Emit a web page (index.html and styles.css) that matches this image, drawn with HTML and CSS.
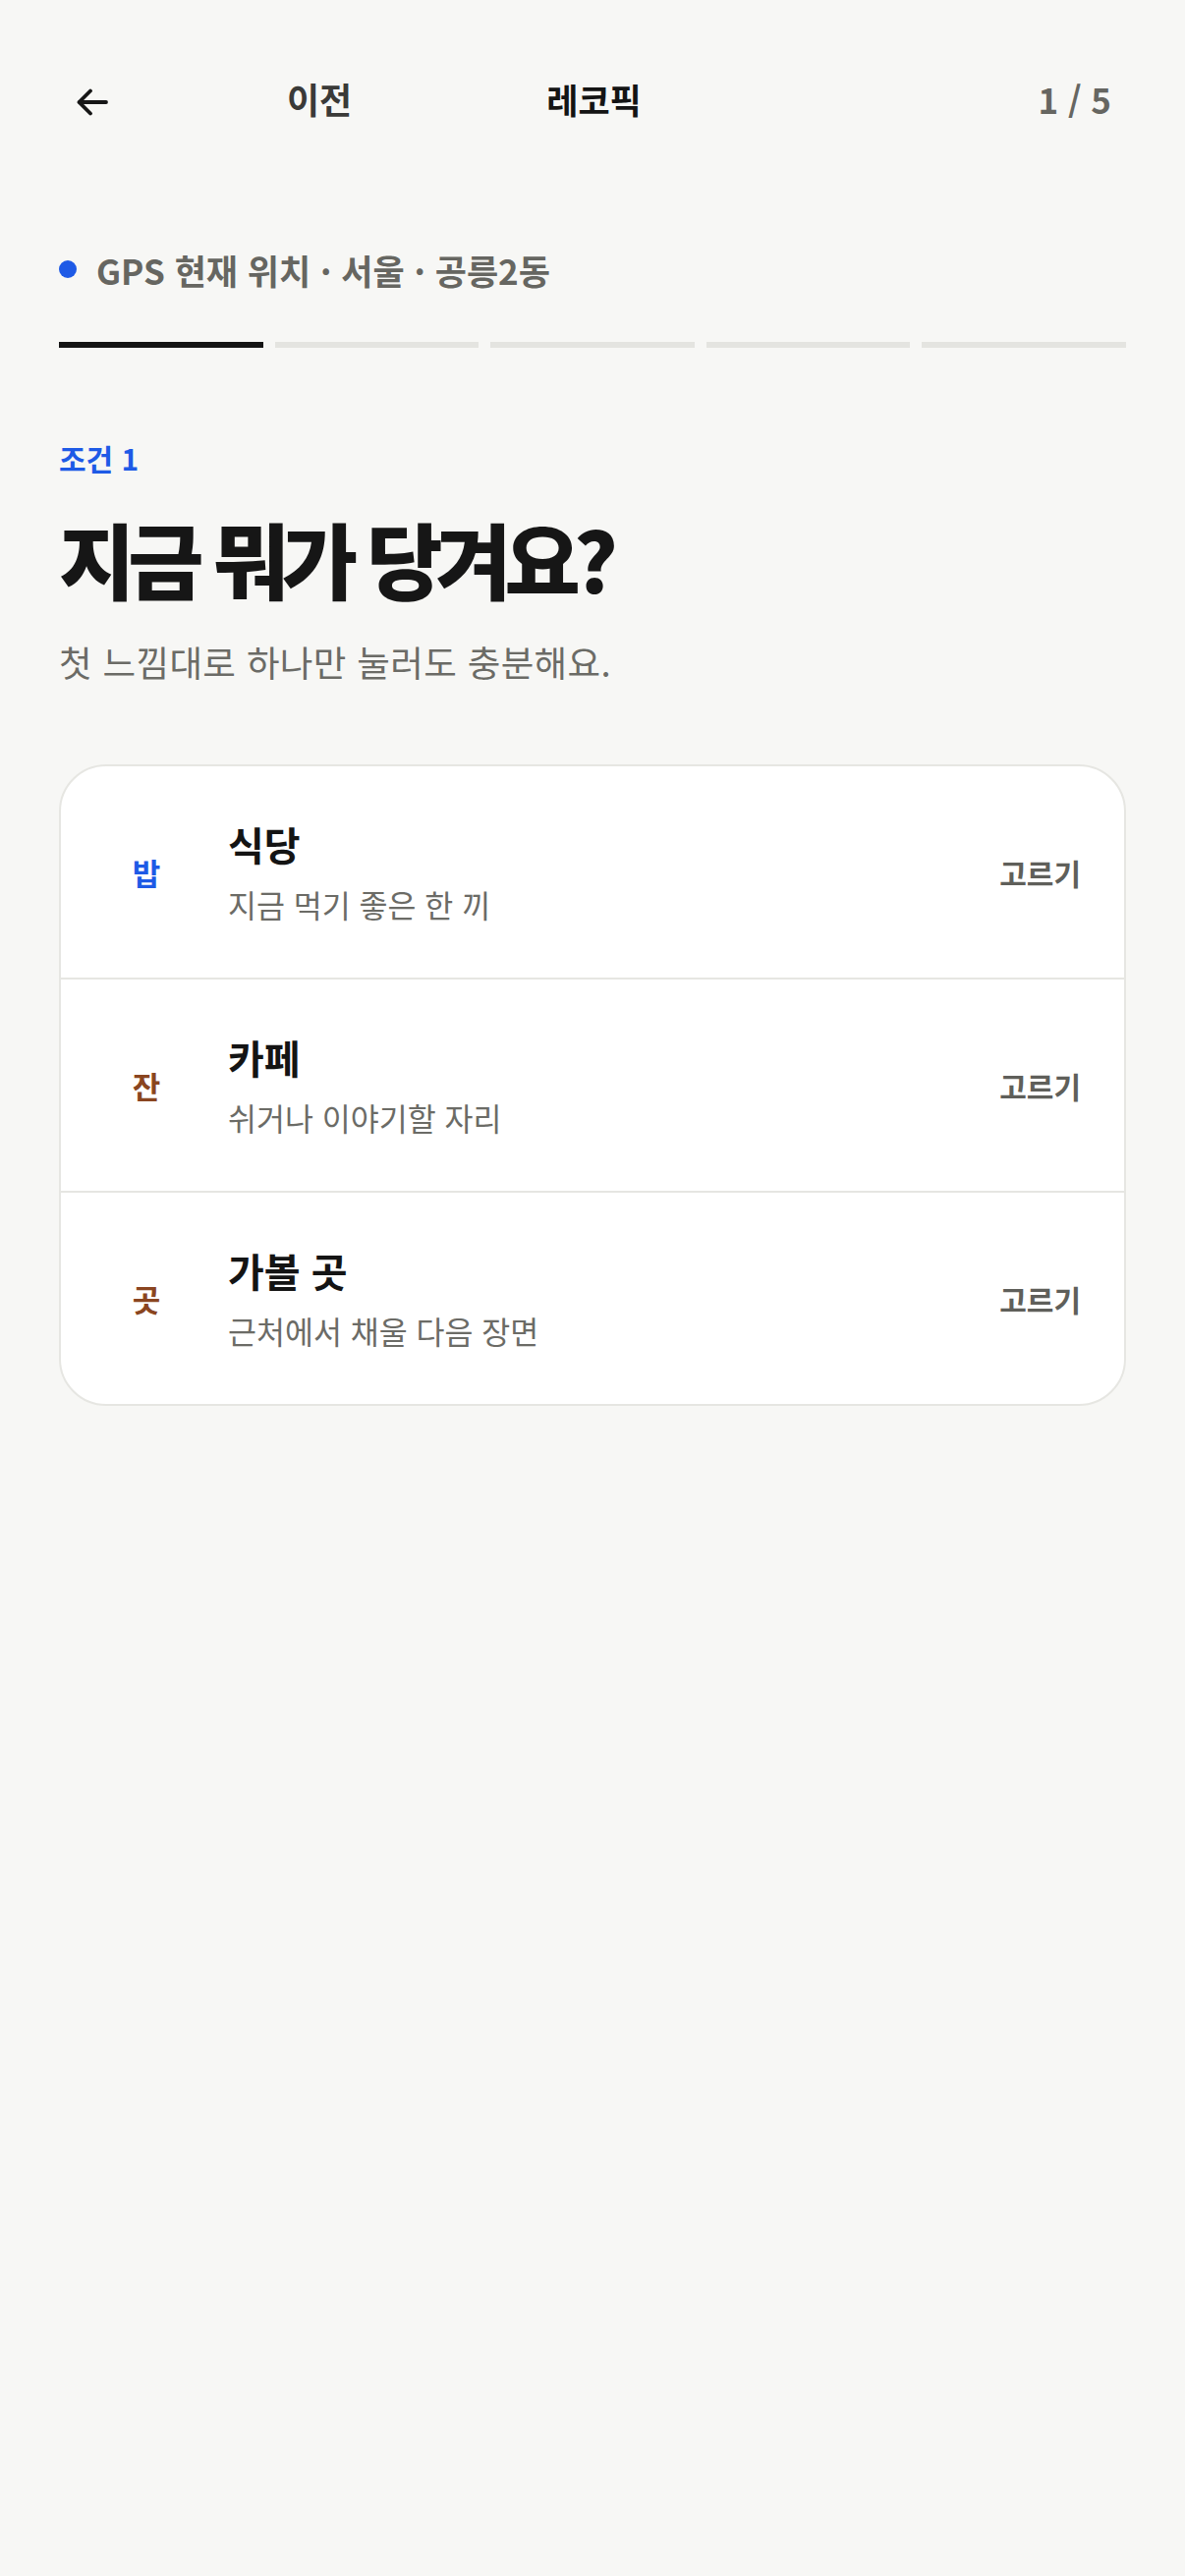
FILE: index.html
```html
<!DOCTYPE html>
<html lang="ko">
<head>
    <meta charset="UTF-8">
    <meta name="viewport" content="width=device-width, initial-scale=1.0">
    <title>레코픽 - 조건 1</title>
    <link rel="stylesheet" href="styles.css">
</head>
<body>
    <header class="topbar">
        <div class="topbar-left">
            <button class="back-btn" aria-label="뒤로">
                <svg width="32" height="28" viewBox="0 0 32 28" fill="none" stroke="#161616" stroke-width="3.8" stroke-linecap="round" stroke-linejoin="round">
                    <path d="M30 14H3"/>
                    <path d="M14 2.5L2.5 14L14 25.5"/>
                </svg>
            </button>
            <span class="prev-label">이전</span>
        </div>
        <div class="brand">레코픽</div>
        <div class="step-count">1 / 5</div>
    </header>

    <main class="page">
        <div class="location">
            <span class="location-dot"></span>
            <span>GPS 현재 위치 · 서울 · 공릉2동</span>
        </div>

        <div class="progress">
            <span class="progress-seg done"></span>
            <span class="progress-seg"></span>
            <span class="progress-seg"></span>
            <span class="progress-seg"></span>
            <span class="progress-seg"></span>
        </div>

        <div class="step-label">조건 1</div>
        <h1 class="question">지금 뭐가 당겨요?</h1>
        <p class="hint">첫 느낌대로 하나만 눌러도 충분해요.</p>

        <div class="choices">
            <div class="choice">
                <span class="choice-icon blue">밥</span>
                <div class="choice-text">
                    <div class="choice-title">식당</div>
                    <div class="choice-desc">지금 먹기 좋은 한 끼</div>
                </div>
                <span class="choice-action">고르기</span>
            </div>
            <div class="choice">
                <span class="choice-icon brown">잔</span>
                <div class="choice-text">
                    <div class="choice-title">카페</div>
                    <div class="choice-desc">쉬거나 이야기할 자리</div>
                </div>
                <span class="choice-action">고르기</span>
            </div>
            <div class="choice">
                <span class="choice-icon brown">곳</span>
                <div class="choice-text">
                    <div class="choice-title">가볼 곳</div>
                    <div class="choice-desc">근처에서 채울 다음 장면</div>
                </div>
                <span class="choice-action">고르기</span>
            </div>
        </div>
    </main>
</body>
</html>
```

FILE: styles.css
```css
body {
    margin: 0;
    min-height: 2622px;
    background-color: #f7f7f5;
    font-family: "Noto Sans CJK KR", "Noto Sans", sans-serif;
    color: #161616;
}
.topbar {
    display: grid;
    grid-template-columns: 1fr auto 1fr;
    align-items: center;
    height: 100px;
    margin-top: 50px;
    padding: 0 75px 0 78px;
}
.topbar-left {
    display: flex;
    align-items: center;
}
.back-btn {
    display: flex;
    margin-top: 8px;
    padding: 0;
    border: none;
    background: none;
    cursor: pointer;
}
.prev-label {
    margin-left: 182px;
    font-size: 36px;
    font-weight: 700;
    color: #3a3a38;
}
.brand {
    font-size: 35px;
    font-weight: 700;
    color: #141414;
}
.step-count {
    justify-self: end;
    font-size: 35px;
    font-weight: 700;
    color: #666661;
}
.page {
    padding: 0 60px;
}
.location {
    display: flex;
    align-items: center;
    gap: 20px;
    margin-top: 102px;
    height: 44px;
    font-size: 35px;
    font-weight: 700;
    color: #666661;
}
.location-dot {
    width: 18px;
    height: 18px;
    border-radius: 50%;
    background-color: #1e5ae6;
}
.progress {
    display: flex;
    gap: 12px;
    margin-top: 52px;
}
.progress-seg {
    flex: 1;
    height: 6px;
    background-color: #e4e4e0;
}
.progress-seg.done {
    background-color: #141414;
}
.step-label {
    margin-top: 94px;
    font-size: 30px;
    line-height: 36px;
    font-weight: 700;
    color: #1e5ae6;
}
.question {
    margin: 34px 0 0;
    font-size: 84px;
    line-height: 99px;
    font-weight: 900;
    letter-spacing: -0.085em;
    color: #161616;
}
.hint {
    margin: 33px 0 0;
    font-size: 36.5px;
    line-height: 48px;
    letter-spacing: 0.01em;
    color: #6b6b66;
}
.choices {
    margin-top: 80px;
    background-color: #fff;
    border: 2px solid #e6e6e2;
    border-radius: 48px;
    overflow: hidden;
}
.choice {
    display: grid;
    grid-template-columns: 60px 1fr auto;
    column-gap: 53px;
    align-items: center;
    height: 215px;
    padding: 0 44px 0 57px;
}
.choice + .choice {
    border-top: 2px solid #e6e6e2;
}
.choice-icon {
    text-align: center;
    font-size: 31px;
    font-weight: 700;
}
.choice-icon.blue {
    color: #1e5ae6;
}
.choice-icon.brown {
    color: #8a4520;
}
.choice-title {
    font-size: 40px;
    line-height: 52px;
    font-weight: 700;
    color: #141414;
}
.choice-desc {
    margin-top: 13px;
    font-size: 31.5px;
    line-height: 44px;
    color: #6b6b66;
}
.choice-action {
    font-size: 30px;
    font-weight: 700;
    color: #5f5f5a;
}
```
